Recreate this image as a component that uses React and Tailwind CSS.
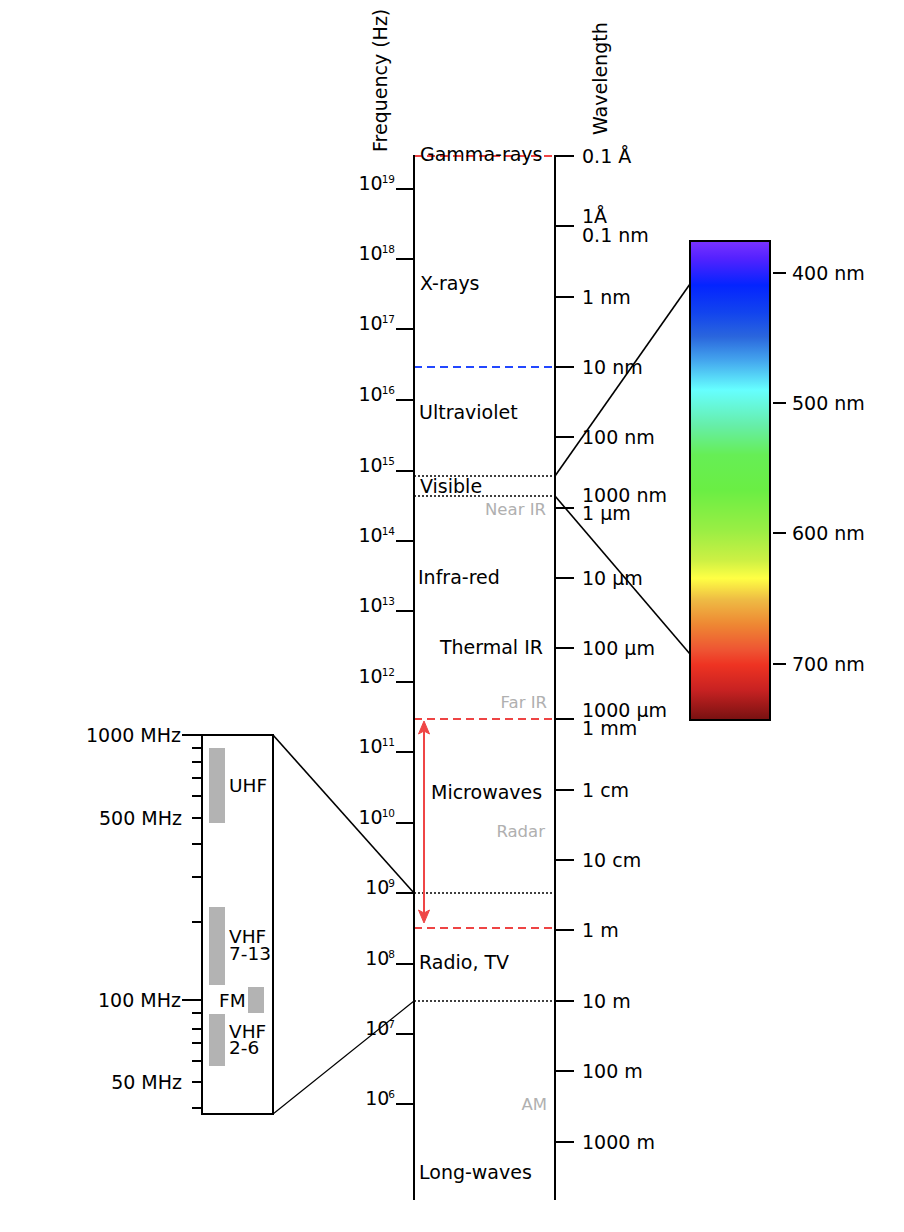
import React from 'react';

// positions measured off the chart, in px
const freqTicks = [
  { exp: 19, y: 189 },
  { exp: 18, y: 259 },
  { exp: 17, y: 329 },
  { exp: 16, y: 400 },
  { exp: 15, y: 471 },
  { exp: 14, y: 541 },
  { exp: 13, y: 611 },
  { exp: 12, y: 682 },
  { exp: 11, y: 752 },
  { exp: 10, y: 823 },
  { exp: 9, y: 893 },
  { exp: 8, y: 964 },
  { exp: 7, y: 1034 },
  { exp: 6, y: 1104 },
];

const waveTicks = [
  { y: 156, labels: [['0.1 Å', 163]] },
  { y: 226, labels: [['1Å', 223], ['0.1 nm', 242]] },
  { y: 297, labels: [['1 nm', 304]] },
  { y: 367, labels: [['10 nm', 374]] },
  { y: 437, labels: [['100 nm', 444]] },
  { y: 508, labels: [['1000 nm', 502], ['1 µm', 520]] },
  { y: 578, labels: [['10 µm', 585]] },
  { y: 648, labels: [['100 µm', 655]] },
  { y: 719, labels: [['1000 µm', 717], ['1 mm', 735]] },
  { y: 790, labels: [['1 cm', 797]] },
  { y: 860, labels: [['10 cm', 867]] },
  { y: 930, labels: [['1 m', 937]] },
  { y: 1001, labels: [['10 m', 1008]] },
  { y: 1071, labels: [['100 m', 1078]] },
  { y: 1142, labels: [['1000 m', 1149]] },
];

const mhzTicks = [748, 762, 778, 796, 844, 877, 922, 1013, 1029, 1043, 1061, 1108];
const mhzMajor = [
  { label: '1000 MHz', y: 735, long: true },
  { label: '500 MHz', y: 818 },
  { label: '100 MHz', y: 1000, long: true },
  { label: '50 MHz', y: 1082 },
];

const spectrumTicks = [
  { label: '400 nm', y: 273 },
  { label: '500 nm', y: 403 },
  { label: '600 nm', y: 533 },
  { label: '700 nm', y: 664 },
];

const spectrumStops = [
  [0, '#7a33ff'],
  [0.035, '#5522ff'],
  [0.092, '#0424ff'],
  [0.15, '#1244ee'],
  [0.2, '#2a66dd'],
  [0.25, '#44a6ee'],
  [0.311, '#66ffff'],
  [0.384, '#66eeaa'],
  [0.447, '#66ee55'],
  [0.52, '#6aee44'],
  [0.603, '#99ee44'],
  [0.666, '#ccf044'],
  [0.704, '#ffff44'],
  [0.749, '#eebb44'],
  [0.8, '#ee8833'],
  [0.853, '#ee5533'],
  [0.885, '#ee3322'],
  [0.937, '#c82222'],
  [1, '#771111'],
];

const Label = ({ x, y, children, anchor = 'start', gray = false, size = 19 }) => (
  <text
    x={x}
    y={y}
    textAnchor={anchor}
    fontSize={size}
    fill={gray ? '#b0b0b0' : '#000'}
  >
    {children}
  </text>
);

export default function App() {
  return (
    <div className="w-[904px] h-[1232px] bg-white overflow-hidden">
      <svg
        width="904"
        height="1232"
        viewBox="0 0 904 1232"
        className="block font-['DejaVu_Sans',sans-serif]"
        fontFamily="'DejaVu Sans', sans-serif"
      >
        <defs>
          <linearGradient id="spectrum" x1="0" y1="0" x2="0" y2="1">
            {spectrumStops.map(([o, c]) => (
              <stop key={o} offset={o} stopColor={c} />
            ))}
          </linearGradient>
        </defs>

        {/* axis titles */}
        <text transform="translate(387 152) rotate(-90)" fontSize="19">Frequency (Hz)</text>
        <text transform="translate(607 135) rotate(-90)" fontSize="19">Wavelength</text>

        {/* band separators */}
        <line x1="414" y1="156" x2="555" y2="156" stroke="#ee4444" strokeWidth="2" strokeDasharray="8 5" />
        <line x1="414" y1="367" x2="555" y2="367" stroke="#2247ff" strokeWidth="2" strokeDasharray="8 5" />
        <line x1="414" y1="476" x2="555" y2="476" stroke="#000" strokeWidth="1.6" strokeDasharray="2 2" />
        <line x1="414" y1="496" x2="555" y2="496" stroke="#000" strokeWidth="1.6" strokeDasharray="2 2" />
        <line x1="414" y1="719" x2="555" y2="719" stroke="#ee4444" strokeWidth="2" strokeDasharray="8 5" />
        <line x1="414" y1="893" x2="555" y2="893" stroke="#000" strokeWidth="1.6" strokeDasharray="2 2" />
        <line x1="414" y1="928" x2="555" y2="928" stroke="#ee4444" strokeWidth="2" strokeDasharray="8 5" />
        <line x1="414" y1="1001" x2="555" y2="1001" stroke="#000" strokeWidth="1.6" strokeDasharray="2 2" />

        {/* microwave range arrow */}
        <line x1="424" y1="728" x2="424" y2="916" stroke="#ef4646" strokeWidth="2" />
        <path d="M424 721 L429.5 734 L424 731 L418.5 734 Z" fill="#ef4646" stroke="#ef4646" strokeWidth="1" strokeLinejoin="round" />
        <path d="M424 923 L429.5 910 L424 913 L418.5 910 Z" fill="#ef4646" stroke="#ef4646" strokeWidth="1" strokeLinejoin="round" />

        {/* main axes */}
        <line x1="414" y1="155" x2="414" y2="1200" stroke="#000" strokeWidth="2" />
        <line x1="555" y1="155" x2="555" y2="1200" stroke="#000" strokeWidth="2" />

        {/* frequency ticks */}
        {freqTicks.map((t) => (
          <g key={t.exp}>
            <line x1="396" y1={t.y} x2="414" y2={t.y} stroke="#000" strokeWidth="2" />
            <text x="395" y={t.y + 1} textAnchor="end" fontSize="19">
              10
              <tspan fontSize="10.5" dx="-1" dy="-7">
                {t.exp}
              </tspan>
            </text>
          </g>
        ))}

        {/* wavelength ticks */}
        {waveTicks.map((t) => (
          <g key={t.y}>
            <line x1="556" y1={t.y} x2="574" y2={t.y} stroke="#000" strokeWidth="2" />
            {t.labels.map(([txt, by]) => (
              <Label key={txt} x={582} y={by}>
                {txt}
              </Label>
            ))}
          </g>
        ))}

        {/* band names */}
        <Label x={420} y={161}>Gamma-rays</Label>
        <Label x={420} y={290}>X-rays</Label>
        <Label x={419} y={419}>Ultraviolet</Label>
        <Label x={420} y={493}>Visible</Label>
        <Label x={546} y={515} anchor="end" gray size={16.5}>Near IR</Label>
        <Label x={418} y={584}>Infra-red</Label>
        <Label x={543} y={654} anchor="end">Thermal IR</Label>
        <Label x={547} y={708} anchor="end" gray size={16.5}>Far IR</Label>
        <Label x={431} y={799}>Microwaves</Label>
        <Label x={545} y={837} anchor="end" gray size={16.5}>Radar</Label>
        <Label x={419} y={969}>Radio, TV</Label>
        <Label x={547} y={1110} anchor="end" gray size={16.5}>AM</Label>
        <Label x={419} y={1179}>Long-waves</Label>

        {/* zoom into visible light */}
        <line x1="555" y1="476" x2="690" y2="284" stroke="#000" strokeWidth="1.6" />
        <line x1="555" y1="496" x2="690" y2="654" stroke="#000" strokeWidth="1.6" />
        <rect x="690" y="241" width="80" height="479" fill="url(#spectrum)" stroke="#000" strokeWidth="2" />
        {spectrumTicks.map((t) => (
          <g key={t.label}>
            <line x1="773" y1={t.y} x2="786" y2={t.y} stroke="#000" strokeWidth="2" />
            <Label x={792} y={t.y + 7}>{t.label}</Label>
          </g>
        ))}

        {/* zoom into broadcast bands */}
        <line x1="273" y1="735" x2="414" y2="893" stroke="#000" strokeWidth="1.6" />
        <line x1="273" y1="1114" x2="414" y2="1001" stroke="#000" strokeWidth="1.2" />
        <rect x="202" y="735" width="71" height="379" fill="#fff" stroke="#000" strokeWidth="2" />
        <rect x="209" y="748" width="16" height="75" fill="#b3b3b3" />
        <rect x="209" y="907" width="16" height="78" fill="#b3b3b3" />
        <rect x="248" y="987" width="16" height="26" fill="#b3b3b3" />
        <rect x="209" y="1014" width="16" height="52" fill="#b3b3b3" />
        <Label x={229} y={792} size={18.5}>UHF</Label>
        <Label x={229} y={943} size={18.5}>VHF</Label>
        <Label x={229} y={960} size={18.5}>7-13</Label>
        <Label x={219} y={1007} size={18.5}>FM</Label>
        <Label x={229} y={1038} size={18.5}>VHF</Label>
        <Label x={229} y={1054} size={18.5}>2-6</Label>

        {mhzTicks.map((y) => (
          <line key={y} x1="192" y1={y} x2="202" y2={y} stroke="#000" strokeWidth="2" />
        ))}
        {mhzMajor.map((t) => (
          <g key={t.label}>
            <line x1={t.long ? 182 : 192} y1={t.y} x2="202" y2={t.y} stroke="#000" strokeWidth="2" />
            <Label x={t.long ? 181 : 182} y={t.y + 7} anchor="end">
              {t.label}
            </Label>
          </g>
        ))}
      </svg>
    </div>
  );
}
